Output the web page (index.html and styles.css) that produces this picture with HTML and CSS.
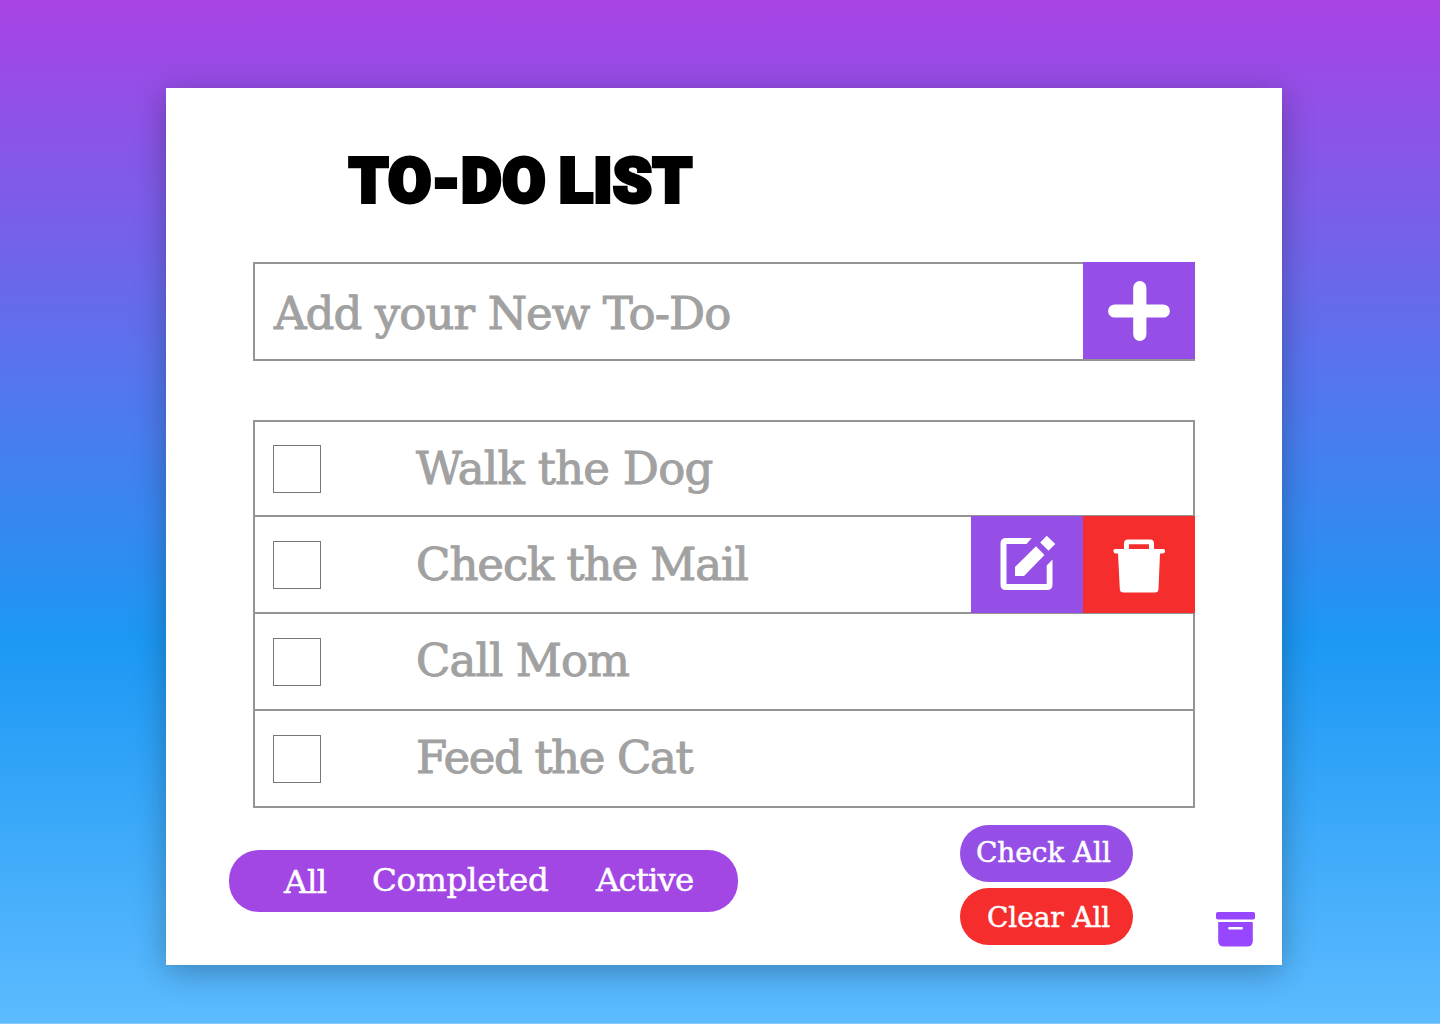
FILE: index.html
```html
<!DOCTYPE html>
<html lang="en">
<head>
<meta charset="utf-8">
<title>To-Do List</title>
<link rel="stylesheet" href="styles.css">
</head>
<body>
<main class="card">
  <h1 class="title">TO-DO <span class="title-end">LIST</span></h1>

  <form class="add">
    <span class="add-label">Add your New To-Do</span>
    <button class="tile tile-add" type="button" aria-label="Add">
      <svg width="62" height="60" viewBox="0 0 62 60"><path d="M6.7 30H55.3M31.8 6.7V53.3" stroke="#fff" stroke-width="13.2" stroke-linecap="round"/></svg>
    </button>
  </form>

  <ul class="list">
    <li class="row"><span class="box"></span><span class="label t-walk">Walk the Dog</span></li>
    <li class="row"><span class="box"></span><span class="label t-check">Check the Mail</span>
      <div class="actions">
        <button class="tile tile-edit" type="button" aria-label="Edit">
          <svg width="56" height="56" viewBox="0 0 56 56" fill="#fff"><path d="M31.8 3H6Q0.5 3 0.5 8.500V49.500Q0.500 55 6 55H47Q52.500 55 52.500 49.500V24.500L46.700 30.500V49H6.500V9H26.500Z"/><path d="M36 11.300L44.500 20L24 41H15V32Z"/><path d="M46.700.7L55.300 9L48.500 15.800L40.200 7.500Z"/></svg>
        </button>
        <button class="tile tile-red" type="button" aria-label="Delete">
          <svg width="52" height="54" viewBox="0 0 52 54" fill="#fff"><path fill-rule="evenodd" d="M11 10V4.500Q11 .5 15 .5H37Q41 .5 41 4.500V10H50.500Q52 10 52 11.500V12.500Q52 14.500 49.500 14.500H47L45.500 50Q45.300 53.500 42 53.500H10.500Q7 53.500 6.800 50L5 14.500H3Q.5 14.500.5 12.500V11.500Q.5 10 2 10ZM16 5.300V10H36V5.300Z"/></svg>
        </button>
      </div>
    </li>
    <li class="row"><span class="box"></span><span class="label t-call">Call Mom</span></li>
    <li class="row"><span class="box"></span><span class="label t-feed">Feed the Cat</span></li>
  </ul>

  <footer class="footer">
    <nav class="filters">
      <a class="f-all">All</a><a class="f-completed">Completed</a><a class="f-active">Active</a>
    </nav>
    <div class="bulk">
      <button class="pill" type="button">Check All</button>
      <button class="pill pill-red" type="button">Clear All</button>
    </div>
    <svg class="archive" width="39" height="35" viewBox="0 0 39 35" fill="#9747ff"><rect width="39" height="7.500" rx="1.800"/><path fill-rule="evenodd" d="M2.200 10H36.800V29Q36.800 34.600 31 34.600H8Q2.200 34.600 2.200 29ZM13 15Q12.200 15 12.200 16.300T13 17.600H26Q26.900 17.600 26.900 16.300T26 15Z"/></svg>
  </footer>
</main>
</body>
</html>
```
FILE: styles.css
```css
* { box-sizing: border-box; }

body {
  margin: 0;
  height: 1024px;
  padding: 88px 158px 58px 166px;
  overflow: hidden;
  border-bottom: 1px solid #86cbff;
  background: linear-gradient(180deg, #a842e4 0%, #1c98f4 62.5%, #5dbbff 100%);
  font-family: "DejaVu Serif", Rockwell, serif;
}

button { border: 0; padding: 0; font: inherit; color: inherit; }

.card {
  height: 877px;
  padding: 58px 0 0 87px;
  background: #fff;
  box-shadow: 0 7px 30px rgba(0, 0, 0, .28);
}

.title {
  margin: 0 0 0 96px;
  height: 116px;
  font: 900 62px/70px Roboto, sans-serif;
  letter-spacing: 1.100px;
  word-spacing: -4px;
  color: #000;
  -webkit-text-stroke: 4px #000;
  white-space: nowrap;
}

.title-end { letter-spacing: .9px; }

.add {
  display: flex;
  width: 942px;
  height: 99px;
  border: 2px solid #949494;
}

.add-label {
  flex: 1;
  padding-left: 19px;
  font-size: 45px;
  line-height: 99px;
  letter-spacing: -.9px;
  color: #a1a1a1;
  -webkit-text-stroke: 1px #a1a1a1;
  white-space: nowrap;
}

.tile {
  display: flex;
  align-items: center;
  justify-content: center;
  width: 112px;
  height: 97px;
  background: #954fe6;
}

.tile-add { margin: -2px -2px 0 0; }
.tile-edit { padding: 0 0 3px 2px; }
.tile-red { padding-top: 2px; background: #f52d2d; }

.list {
  width: 942px;
  margin: 59px 0 0;
  padding: 0;
  list-style: none;
  border: 2px solid #949494;
}

.row {
  display: flex;
  height: 97px;
  padding: 24px 0 0 18px;
  border-bottom: 2px solid #949494;
}

.row:first-child { height: 95px; padding-top: 23px; }
.row:last-child { height: 95px; border-bottom: 0; }

.box {
  width: 48px;
  height: 48px;
  border: 1px solid #767676;
}

.label {
  margin-left: 95px;
  font-size: 45px;
  line-height: 46px;
  color: #a1a1a1;
  -webkit-text-stroke: 1px #a1a1a1;
  white-space: nowrap;
}

.t-walk { padding-top: 1px; letter-spacing: -.7px; }
.t-check { padding-top: 1px; letter-spacing: -1.050px; }
.t-call { letter-spacing: -.9px; }
.t-feed { letter-spacing: -1.350px; }

.actions {
  display: flex;
  margin: -25px -2px 0 auto;
}

.footer {
  display: flex;
  margin: 17px 0 0 -24px;
  color: #fff;
}

.filters {
  display: flex;
  width: 509px;
  height: 62px;
  margin-top: 25px;
  padding-left: 55px;
  border-radius: 30px;
  background: #a347e4;
  font-size: 32.500px;
  line-height: 60px;
  white-space: nowrap;
  -webkit-text-stroke: .5px #fff;
}

.f-all { width: 88px; padding-top: 2px; letter-spacing: -.5px; }
.f-completed { width: 224px; letter-spacing: -.25px; }
.f-active { letter-spacing: -.9px; }

.bulk {
  display: flex;
  flex-direction: column;
  gap: 6px;
  margin-left: 222px;
}

.pill {
  display: flex;
  width: 173px;
  height: 57px;
  padding-left: 16px;
  border-radius: 28.500px;
  background: #954fe6;
  font-size: 28px;
  line-height: 56px;
  letter-spacing: -.1px;
  white-space: nowrap;
  -webkit-text-stroke: .5px #fff;
}

.pill-red { padding: 2px 0 0 27px; background: #f52d2d; }

.archive { margin: 87px 0 0 83px; }
```
